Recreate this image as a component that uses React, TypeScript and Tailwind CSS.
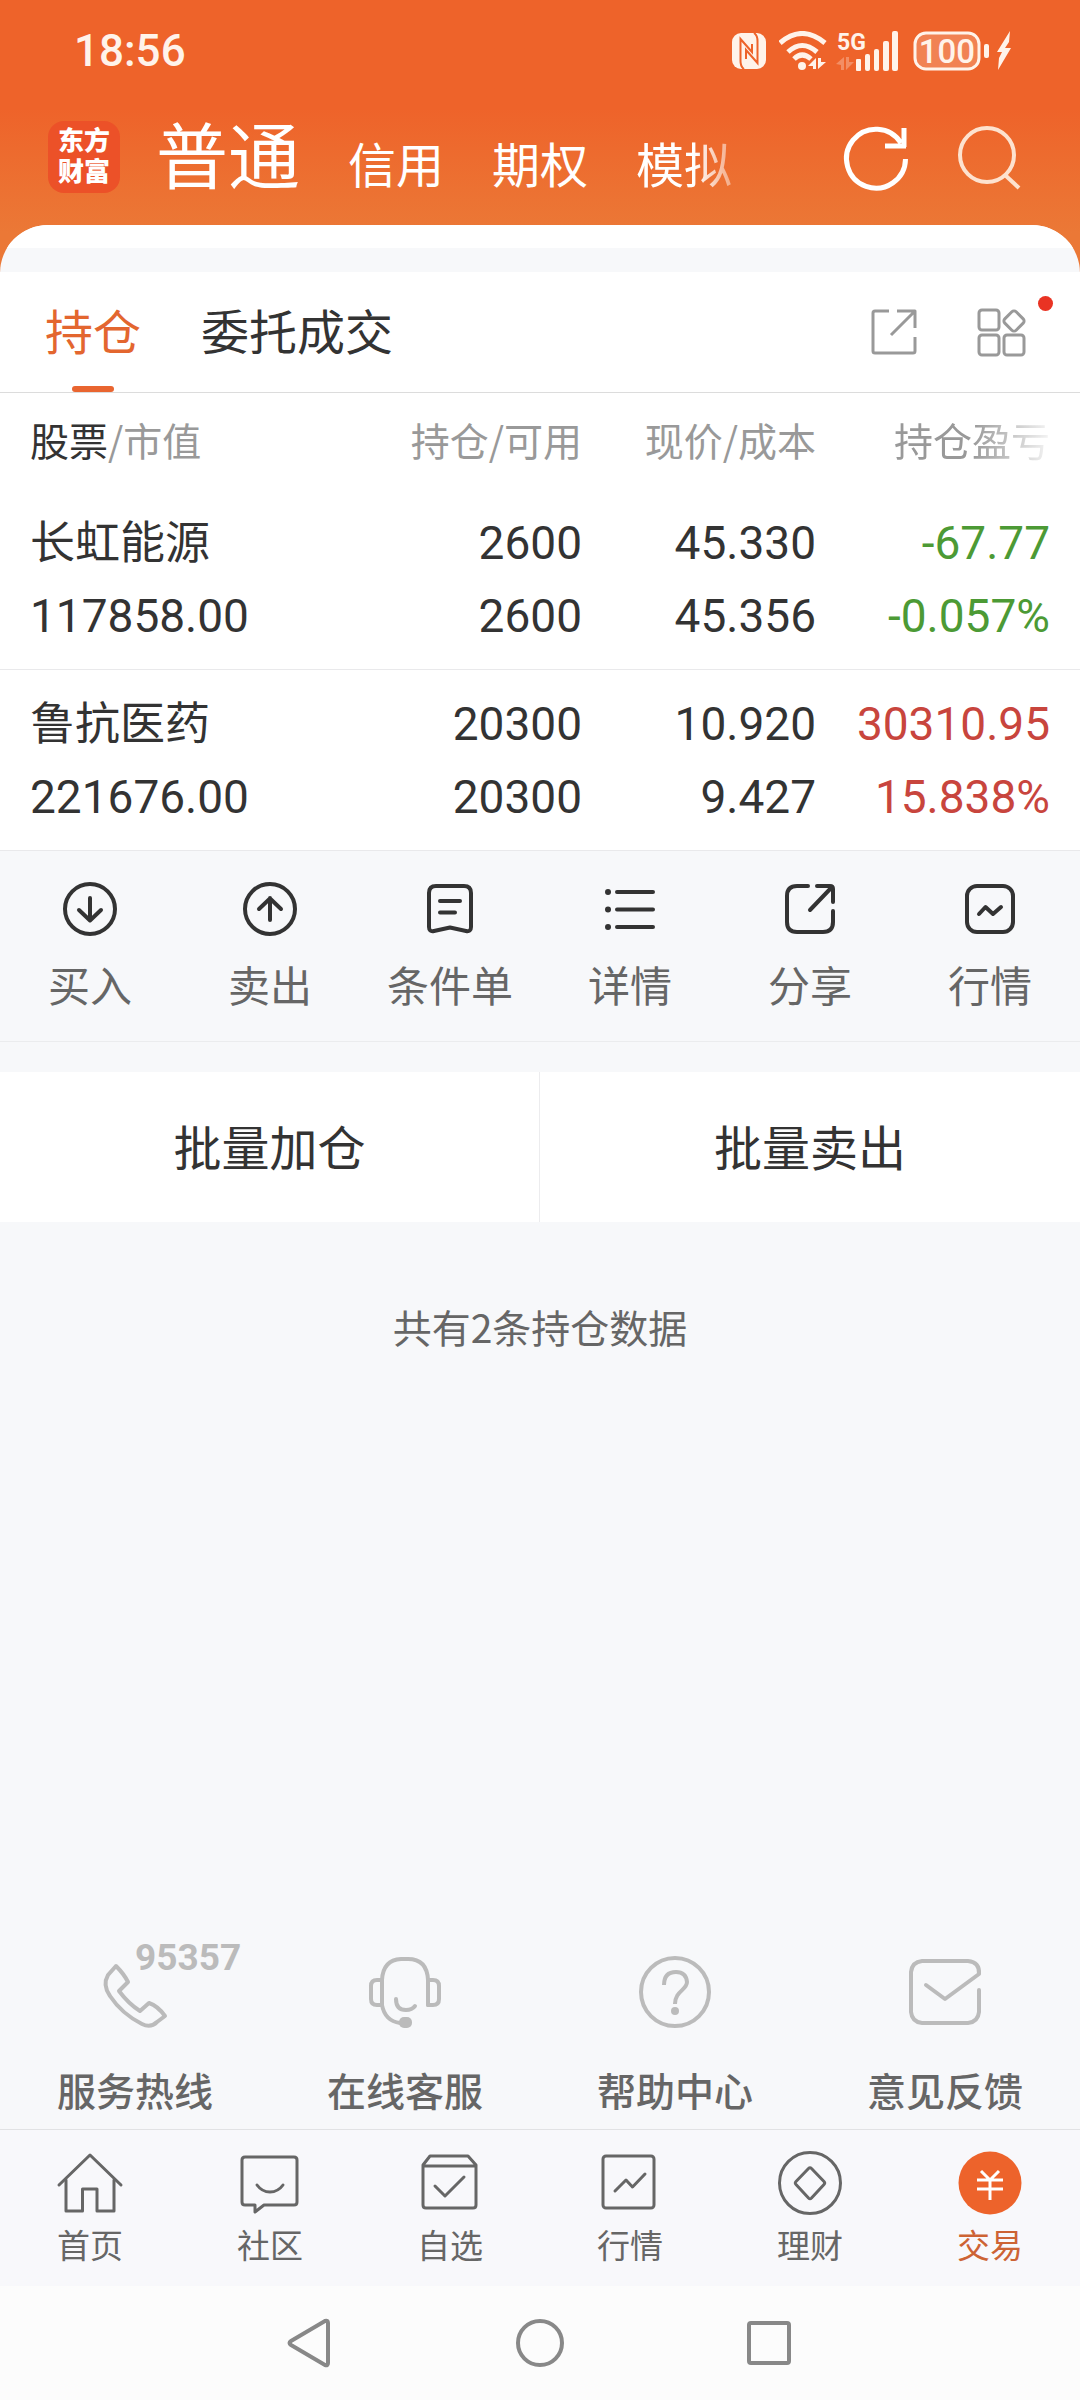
import { useState } from "react";
import type { ReactNode } from "react";
import clsx from "clsx";

type IconProps = {
  size: number;
  stroke?: number;
  className?: string;
  children: ReactNode;
};

const Icon = ({ size, stroke = 3, className, children }: IconProps) => (
  <svg
    width={size}
    height={size}
    viewBox={`0 0 ${size} ${size}`}
    fill="none"
    stroke="currentColor"
    strokeWidth={stroke}
    strokeLinecap="round"
    strokeLinejoin="round"
    aria-hidden="true"
    className={clsx("shrink-0 overflow-visible", className)}
  >
    {children}
  </svg>
);

const accounts = ["信用", "期权", "模拟"];

const holdings = [
  {
    name: "长虹能源",
    value: "117858.00",
    amount: "2600",
    available: "2600",
    price: "45.330",
    cost: "45.356",
    profit: "-67.77",
    percent: "-0.057%",
    color: "text-[#4c9a35]",
  },
  {
    name: "鲁抗医药",
    value: "221676.00",
    amount: "20300",
    available: "20300",
    price: "10.920",
    cost: "9.427",
    profit: "30310.95",
    percent: "15.838%",
    color: "text-[#c8453d]",
  },
];

const actions = [
  {
    label: "买入",
    icon: (
      <>
        <circle cx="27" cy="27" r="25" />
        <path d="M27 16V38M16 28L27 38.500L38 28" />
      </>
    ),
  },
  {
    label: "卖出",
    icon: (
      <>
        <circle cx="27" cy="27" r="25" />
        <path d="M27 38V16M16 27L27 16.500L38 27" />
      </>
    ),
  },
  {
    label: "条件单",
    icon: (
      <>
        <path d="M13 4H41Q48 4 48 11V45Q48 50 43 49L27 45.500L11 49Q6 50 6 45V11Q6 4 13 4Z" />
        <path d="M17 19H37M17 30.500H32" />
      </>
    ),
  },
  {
    label: "详情",
    icon: (
      <>
        <path d="M14 10H50M14 27.500H50M14 45H50" />
        <path d="M5 10h.01M5 27.500h.01M5 45h.01" strokeWidth="6" />
      </>
    ),
  },
  {
    label: "分享",
    icon: (
      <>
        <path d="M25 4H14Q4 4 4 14V40Q4 50 14 50H40Q50 50 50 40V29" />
        <path d="M34 4H47Q50 4 50 7V20M49 5L27 28" />
      </>
    ),
  },
  {
    label: "行情",
    icon: (
      <>
        <rect x="4" y="4" width="46" height="46" rx="10" />
        <path d="M16 32L22.500 25L30 32L38 25" />
      </>
    ),
  },
];

const services = [
  {
    label: "服务热线",
    icon: (
      <path d="M17 10L9 19C5 26 6 33 11 40C19 52 29 61 43 68C49 71 54 70 58 66L66 60C61 53 56 49 50 47L41 55C33 50 26 43 20 35L29 26C26 20 22 15 17 10Z" />
    ),
  },
  {
    label: "在线客服",
    icon: (
      <>
        <path d="M59 49V24Q58 3 39 3H32Q14 4 13 24V49Q16 65 31 67" />
        <path d="M13 24H8Q2 24 2 30V43Q2 49 8 49H13M59 24H64Q70 24 70 30V43Q70 49 64 49H59" />
        <path d="M27 43Q27 54 37 54Q43 54 46 50" />
        <rect x="30" y="61" width="13" height="11" rx="5" fill="currentColor" stroke="none" />
      </>
    ),
  },
  {
    label: "帮助中心",
    icon: (
      <>
        <circle cx="36" cy="36" r="34" />
        <path d="M25 29Q25 16 37 16Q47 16 48 26C48 34 36 35 36 48" strokeLinecap="butt" />
        <circle cx="36" cy="55" r="4" fill="currentColor" stroke="none" />
      </>
    ),
  },
  {
    label: "意见反馈",
    icon: (
      <path d="M70 34V56Q69 66 59 67H13Q3 66 2 56V16Q3 6 13 5H59Q71 6 70 18L36 43L17 29" />
    ),
  },
];

const navItems = [
  {
    label: "首页",
    icon: (
      <>
        <path d="M1 34L32 4L63 34" />
        <path d="M8 29V60H24.500V38H39V60H56V29" />
      </>
    ),
  },
  {
    label: "社区",
    icon: (
      <>
        <path d="M7 6H56Q59 6 59 9V51Q59 54 56 54H26L17 61V54H7Q4 54 4 51V9Q4 6 7 6Z" />
        <path d="M19 34Q24 41 32 41Q40 41 45 34" />
      </>
    ),
  },
  {
    label: "自选",
    icon: (
      <>
        <path d="M12 5H50L58 14V54Q58 57 55 57H8Q5 57 5 54V14ZM5 15H58" />
        <path d="M17 35L27 45L46 26" />
      </>
    ),
  },
  {
    label: "行情",
    icon: (
      <>
        <rect x="5" y="5" width="51" height="52" rx="3" />
        <path d="M17 40L28 29L34.500 36L47 23" />
      </>
    ),
  },
  {
    label: "理财",
    icon: (
      <>
        <circle cx="32" cy="32" r="30.500" />
        <path d="M30.500 17.500Q32 16 33.500 17.500L46 30.500Q47.500 32 46 33.500L33.500 47Q32 48.500 30.500 47L18 33.500Q16.500 32 18 30.500Z" />
      </>
    ),
  },
  {
    label: "交易",
    icon: (
      <>
        <circle cx="32" cy="32" r="31.500" fill="#ed632b" stroke="none" />
        <path
          d="M23 20L32 29L41 20M19 29H45M19 38H45M32 29V49"
          stroke="#fff"
          strokeLinecap="butt"
        />
      </>
    ),
  },
];

const StatusBar = () => (
  <div className="flex h-[102px] items-center justify-between pr-[68px] pl-[74px] text-[#fff3ea] [font-family:Roboto,sans-serif]">
    <time className="text-[44px] leading-none font-medium">18:56</time>
    <div className="flex items-center">
      <svg width="34" height="36" viewBox="0 0 34 36" fill="none" aria-hidden="true">
        <rect width="34" height="36" rx="9" fill="currentColor" />
        <path
          d="M12 36C9 34 8.500 31 8.500 28V6L20 19V11M22 0C25 2 25.500 5 25.500 8V30L14 17V26"
          stroke="#ee632a"
          strokeWidth="2"
        />
      </svg>
      <svg width="48" height="40" viewBox="0 0 48 40" fill="none" className="ml-[13px]" aria-hidden="true">
        <g stroke="currentColor" strokeWidth="5">
          <path d="M1 12Q23 -7 46 12" />
          <path d="M9 21Q23 8 38 21" />
          <path d="M15 28Q23 20 32 28" />
        </g>
        <circle cx="23" cy="35" r="4" fill="currentColor" />
        <path d="M29 35L37 27V38H34V35ZM39 27V38L47 31H42V27Z" fill="currentColor" />
      </svg>
      <svg
        width="64"
        height="40"
        viewBox="0 0 64 40"
        fill="currentColor"
        className="ml-[9px] overflow-visible"
        aria-hidden="true"
      >
        <text x="1" y="19" className="text-[23px] font-bold">5G</text>
        <path d="M0 33L8 26V39H5V34ZM10 26V39L18 31H13V26Z" opacity="0.3" />
        <rect x="20" y="28" width="5" height="12" rx="1" />
        <rect x="29" y="23" width="5" height="17" rx="2" />
        <rect x="38" y="18" width="5" height="22" rx="2" />
        <rect x="47" y="10" width="6" height="30" rx="2" />
        <rect x="56" y="0" width="6" height="40" rx="2" />
      </svg>
      <svg width="99" height="40" viewBox="0 0 99 40" fill="none" className="ml-[13px]" aria-hidden="true">
        <rect
          x="2"
          y="2"
          width="64"
          height="36"
          rx="11"
          fill="currentColor"
          fillOpacity="0.22"
          stroke="currentColor"
          strokeWidth="3"
        />
        <text x="34" y="32" textAnchor="middle" fill="currentColor" className="text-[33px] font-medium">
          100
        </text>
        <rect x="71" y="13" width="5" height="14" rx="2" fill="currentColor" />
        <path d="M97 0L84 21H89L86 27L85 39L98 17H92L96 11Z" fill="currentColor" />
      </svg>
    </div>
  </div>
);

const Header = () => (
  <header className="bg-linear-to-b from-[#ee632a] from-40% to-[#eb7836] to-85% pb-12 text-white">
    <StatusBar />
    <div className="flex h-[123px] items-center pr-[58px] pb-[13px] pl-12">
      <a
        href="#home"
        className="flex size-[72px] shrink-0 flex-col items-center justify-center rounded-2xl bg-[#ec5128] text-[26px] leading-[31px] font-black [font-family:Roboto,'Noto_Sans_CJK_SC',sans-serif]"
      >
        <span>东方</span>
        <span>财富</span>
      </a>
      <nav className="ml-9 flex items-baseline gap-12 text-5xl leading-[72px] whitespace-nowrap">
        <button type="button" className="text-7xl">普通</button>
        {accounts.map((account) => (
          <button
            key={account}
            type="button"
            className="last:[mask-image:linear-gradient(to_right,black_60%,rgb(0_0_0/0.4))]"
          >
            {account}
          </button>
        ))}
      </nav>
      <div className="ml-auto flex gap-[49px]">
        <button type="button" aria-label="刷新">
          <Icon size={64} stroke={5}>
            <path
              d="M60.500 34A29.500 29.500 0 1 1 56 18M59 3V22M40 21H61"
              strokeLinecap="butt"
            />
          </Icon>
        </button>
        <button type="button" aria-label="搜索" className="text-[#fde2cf]">
          <Icon size={64} stroke={4}>
            <circle cx="29" cy="30" r="27" />
            <path d="M47 50L61 63" strokeLinecap="butt" />
          </Icon>
        </button>
      </div>
    </div>
  </header>
);

const Tabs = () => {
  const [active, setActive] = useState("持仓");

  return (
    <div className="relative flex h-[121px] items-stretch border-b border-[#dcdcdc] bg-white pr-[51px] pl-[45px] text-5xl">
      <div className="flex gap-[60px]">
        {["持仓", "委托成交"].map((tab) => (
          <button
            key={tab}
            type="button"
            onClick={() => setActive(tab)}
            className={clsx(
              "relative pb-[6px]",
              active === tab ? "text-[#e3662f]" : "text-[#333]"
            )}
          >
            {tab}
            {active === tab && (
              <span className="absolute bottom-0 left-1/2 h-[6px] w-[42px] -translate-x-1/2 rounded-full bg-[#e96530]" />
            )}
          </button>
        ))}
      </div>
      <div className="ml-auto flex items-center gap-[60px] text-[#999]">
        <button type="button" aria-label="分享持仓">
          <Icon size={48}>
            <path
              d="M19 3H5Q3 3 3 5V43Q3 45 5 45H43Q45 45 45 43V29M27 3H45V20M45 3L21 27"
              strokeLinecap="butt"
            />
          </Icon>
        </button>
        <button type="button" aria-label="更多功能">
          <Icon size={51}>
            <rect x="1" y="3" width="20" height="20" rx="3" />
            <rect x="1" y="28" width="20" height="20" rx="3" />
            <rect x="26" y="28" width="20" height="20" rx="3" />
            <rect x="28" y="6" width="16" height="16" rx="3" transform="rotate(45 36 14)" />
          </Icon>
        </button>
      </div>
      <span className="absolute top-6 right-[27px] size-[15px] rounded-full bg-[#e93323]" />
    </div>
  );
};

const HoldingsTable = () => (
  <table className="w-full table-fixed bg-white text-right text-[#333]">
    <thead>
      <tr className="h-24 text-[39px] text-[#999] [&>th]:px-0 [&>th]:pt-0 [&>th]:pb-1 [&>th]:font-normal">
        <th className="text-left">
          <span className="pl-[30px] text-[#333]">股票</span>/市值
        </th>
        <th className="w-[234px]">持仓/可用</th>
        <th className="w-[234px]">现价/成本</th>
        <th className="w-[264px]">
          <span className="mr-[30px] inline-block [mask-image:linear-gradient(to_right,black_50%,rgb(0_0_0/0.1))]">
            持仓盈亏
          </span>
        </th>
      </tr>
    </thead>
    <tbody className="[font-family:Roboto,'Noto_Sans_CJK_SC',sans-serif]">
      {holdings.map((item) => (
        <tr
          key={item.name}
          className="border-b border-[#e9e9eb] text-[46px] leading-[73px] [&>td]:px-0 [&>td]:pt-[18px] [&>td]:pb-4"
        >
          <td className="text-left">
            <div className="pl-[30px] text-[45px]">{item.name}</div>
            <div className="pl-[30px]">{item.value}</div>
          </td>
          <td>
            <div>{item.amount}</div>
            <div>{item.available}</div>
          </td>
          <td>
            <div>{item.price}</div>
            <div>{item.cost}</div>
          </td>
          <td className={item.color}>
            <div className="pr-[30px]">{item.profit}</div>
            <div className="pr-[30px]">{item.percent}</div>
          </td>
        </tr>
      ))}
    </tbody>
  </table>
);

const App = () => {
  const [page, setPage] = useState("交易");

  return (
    <div className="flex min-h-screen flex-col bg-[#f7f8fa] [font-family:'Noto_Sans_CJK_SC',sans-serif]">
      <Header />
      <main className="-mt-12 flex grow flex-col overflow-hidden rounded-t-[48px] bg-[#f7f8fa]">
        <div className="h-[23px] bg-white" />
        <div className="h-6" />
        <Tabs />
        <HoldingsTable />
        <div className="grid grid-cols-6 border-b border-[#ebecee] pt-[31px] pb-[27px] text-[42px] leading-[60px] text-[#666]">
          {actions.map(({ label, icon }) => (
            <button key={label} type="button" className="flex flex-col items-center gap-[18px]">
              <Icon size={54} stroke={4} className="text-[#333]">{icon}</Icon>
              {label}
            </button>
          ))}
        </div>
        <div className="mt-[30px] grid grid-cols-2 divide-x divide-[#ececee] bg-white text-5xl leading-[146px] text-[#333]">
          <button type="button" className="pb-1">批量加仓</button>
          <button type="button" className="pb-1">批量卖出</button>
        </div>
        <p className="mt-[74px] text-center text-[39px] leading-[60px] text-[#666]">
          共有2条持仓数据
        </p>
        <div className="mt-auto grid grid-cols-4 pb-[10px] text-[39px] leading-[60px] font-medium text-[#666]">
          {services.map(({ label, icon }, index) => (
            <a
              key={label}
              href="#service"
              className="relative flex flex-col items-center gap-[31px]"
            >
              <Icon size={72} stroke={4} className="text-[#bbb]">{icon}</Icon>
              {index === 0 && (
                <span className="absolute -top-5 left-1/2 text-[37px] leading-[44px] font-bold text-[#bbb] [font-family:Roboto,sans-serif]">
                  95357
                </span>
              )}
              {label}
            </a>
          ))}
        </div>
      </main>
      <nav className="grid grid-cols-6 border-t border-[#e1e2e4] bg-[#f8f8fb] pt-[21px] pb-[17px] text-[33px] leading-[50px]">
        {navItems.map(({ label, icon }) => (
          <button
            key={label}
            type="button"
            onClick={() => setPage(label)}
            className={clsx(
              "flex flex-col items-center gap-1",
              page === label ? "text-[#cd6334]" : "text-[#666]"
            )}
          >
            <Icon size={64}>{icon}</Icon>
            {label}
          </button>
        ))}
      </nav>
      <div className="flex h-[114px] items-center justify-center gap-[180px] bg-[#fcfcfc] text-[#888]">
        <button type="button" aria-label="返回">
          <Icon size={50} stroke={4}>
            <path d="M6 23L40 3Q43 2 43 5V45Q43 48 40 47L6 27Q3 25 6 23Z" />
          </Icon>
        </button>
        <button type="button" aria-label="主屏幕">
          <Icon size={50} stroke={4}>
            <circle cx="25" cy="25" r="22" />
          </Icon>
        </button>
        <button type="button" aria-label="最近任务">
          <Icon size={50} stroke={4}>
            <rect x="4" y="5" width="40" height="40" rx="2" />
          </Icon>
        </button>
      </div>
    </div>
  );
};

export default App;
